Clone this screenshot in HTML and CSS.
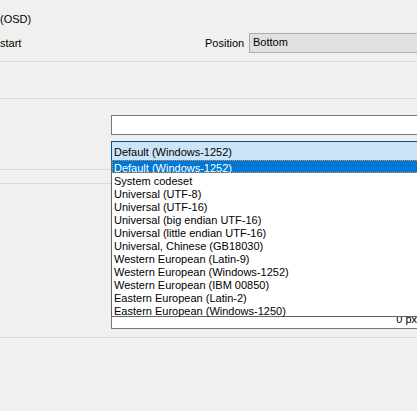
FILE: index.html
```html
<!DOCTYPE html>
<html>
<head>
<meta charset="utf-8">
<link rel="stylesheet" href="styles.css">
</head>
<body>
<div class="page">
  <div class="row1">(OSD)</div>
  <div class="row2">
    <span class="start">start</span>
    <span class="pos-label">Position</span>
    <div class="pos-combo">Bottom</div>
  </div>
  <div class="sep sep1"></div>
  <div class="sep sep2"></div>
  <div class="textbox"></div>
  <div class="combo">
    <div class="combo-value">Default (Windows-1252)</div>
    <ul class="dropdown">
      <li class="item selected">Default (Windows-1252)</li>
      <li class="item">System codeset</li>
      <li class="item">Universal (UTF-8)</li>
      <li class="item">Universal (UTF-16)</li>
      <li class="item">Universal (big endian UTF-16)</li>
      <li class="item">Universal (little endian UTF-16)</li>
      <li class="item">Universal, Chinese (GB18030)</li>
      <li class="item">Western European (Latin-9)</li>
      <li class="item">Western European (Windows-1252)</li>
      <li class="item">Western European (IBM 00850)</li>
      <li class="item">Eastern European (Latin-2)</li>
      <li class="item">Eastern European (Windows-1250)</li>
    </ul>
  </div>
  <div class="sep sep3"></div>
  <div class="sep sep4"></div>
  <div class="spinbox"><span class="spin-text">0 px</span></div>
  <div class="sep sep5"></div>
</div>
</body>
</html>
```

FILE: styles.css
```css
html, body {
  margin: 0;
  padding: 0;
  background: #f0f0f0;
}
body {
  width: 417px;
  height: 411px;
  overflow: hidden;
  font-family: "Liberation Sans", Arial, sans-serif;
  font-size: 11px;
  line-height: 13px;
  color: #000;
}
.page {
  position: relative;
  width: 417px;
}
.row1 {
  margin-top: 13px;
  height: 13px;
  white-space: nowrap;
}
.row2 {
  margin-top: 7px;
  height: 20px;
  display: flex;
  align-items: center;
  white-space: nowrap;
}
.start {
  flex: 0 0 205px;
}
.pos-label {
  flex: 0 0 44px;
}
.pos-combo {
  flex: 0 0 168px;
  box-sizing: border-box;
  height: 20px;
  background: #e1e1e1;
  border: 1px solid #adadad;
  border-right: none;
  padding: 2px 0 0 3px;
}
.sep {
  height: 1px;
  background: #dadada;
  width: 417px;
}
.sep1 { margin-top: 8px; }
.sep2 { margin-top: 36px; }
.sep3 { margin-top: 9px; }
.sep4 { margin-top: 13px; }
.sep5 { margin-top: 8px; }
.textbox {
  margin-top: 16px;
  margin-left: 111px;
  width: 306px;
  height: 20px;
  box-sizing: border-box;
  background: #fff;
  border: 1px solid #7a7a7a;
  border-right: none;
}
.combo {
  position: relative;
  margin-top: 6px;
  margin-left: 111px;
  width: 306px;
  height: 19px;
}
.combo-value {
  box-sizing: border-box;
  height: 19px;
  background: #cce4f7;
  border: 1px solid #005499;
  border-right: none;
  border-bottom: none;
  padding: 4px 0 0 2px;
  white-space: nowrap;
}
.dropdown {
  position: absolute;
  top: 19px;
  left: 0;
  width: 306px;
  box-sizing: border-box;
  margin: 0;
  padding: 0;
  list-style: none;
  background: #fff;
  border-left: 1px solid #646464;
  border-bottom: 1px solid #646464;
  z-index: 5;
}
.item {
  height: 13px;
  box-sizing: border-box;
  padding-left: 2px;
  line-height: 16px;
  white-space: nowrap;
}
.item.selected {
  background: #0078d7;
  color: #fff;
  border: 1px dotted #f08a3c;
  border-right: none;
  padding-left: 1px;
  line-height: 14px;
}
.spinbox {
  margin-top: 125px;
  margin-left: 111px;
  width: 306px;
  height: 20px;
  box-sizing: border-box;
  background: #fff;
  border: 1px solid #7a7a7a;
  border-right: none;
  display: flex;
  align-items: flex-end;
  justify-content: flex-end;
}
.spin-text {
  line-height: 13px;
  padding-bottom: 2px;
}
```
